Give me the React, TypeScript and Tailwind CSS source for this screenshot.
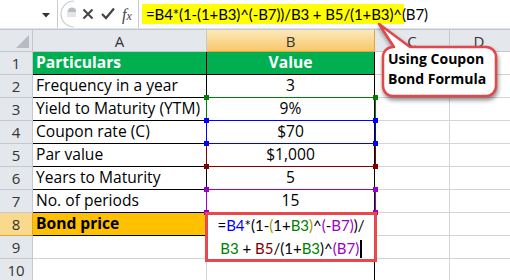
import React from "react";

const font = { fontFamily: "'Open Sans', Lato, sans-serif" };
const lato = { fontFamily: "Lato, 'Open Sans', sans-serif" };

const rows = [
  { n: 1, a: "Particulars", b: "Value", kind: "head" },
  { n: 2, a: "Frequency in a year", b: "3" },
  { n: 3, a: "Yield to Maturity (YTM)", b: "9%", ref: "border-[#008000]", handle: "bg-[#008000]", z: "z-10" },
  { n: 4, a: "Coupon rate (C)", b: "$70", ref: "border-[#0000ff]", handle: "bg-[#0000ff]", z: "z-30" },
  { n: 5, a: "Par value", b: "$1,000", ref: "border-[#800000]", handle: "bg-[#800000]", z: "z-20" },
  { n: 6, a: "Years to Maturity", b: "5" },
  { n: 7, a: "No. of periods", b: "15", ref: "border-[#9900cc]", handle: "bg-[#9900cc]", z: "z-10" },
  { n: 8, a: "Bond price", b: "", kind: "total" },
  { n: 9, a: "", b: "", kind: "empty" },
  { n: 10, a: "", b: "", kind: "empty" },
];

const RefBox = ({ border, handle, z }: { border: string; handle: string; z: string }) => (
  <div className={`absolute -left-px -top-px w-[170px] h-[24px] border ${border} ${z} pointer-events-none`}>
    <div className={`absolute -left-[3px] -top-[3px] w-[5px] h-[5px] ${handle}`} />
    <div className={`absolute -right-[3px] -top-[3px] w-[5px] h-[5px] ${handle}`} />
    <div className={`absolute -left-[3px] -bottom-[3px] w-[5px] h-[5px] ${handle}`} />
    <div className={`absolute -right-[3px] -bottom-[3px] w-[5px] h-[5px] ${handle}`} />
  </div>
);

const Blue = ({ children }: { children: React.ReactNode }) => <span className="text-[#0000ff]">{children}</span>;
const Green = ({ children }: { children: React.ReactNode }) => <span className="text-[#008000]">{children}</span>;
const Red = ({ children }: { children: React.ReactNode }) => <span className="text-[#800000]">{children}</span>;
const Purple = ({ children }: { children: React.ReactNode }) => <span className="text-[#9900cc]">{children}</span>;
const Olive = ({ children }: { children: React.ReactNode }) => <span className="text-[#999900]">{children}</span>;

export default function App() {
  return (
    <div className="relative w-[510px] h-[280px] bg-white overflow-hidden text-[15.6px] text-black" style={font}>
      {/* formula bar */}
      <div className="flex h-[30px] bg-[#dfe3e8] border-b border-[#c2c7ce]">
        <div className="flex items-center w-[58px] h-[28px] bg-white border-r border-[#c8ccd2] relative">
          <svg className="absolute left-[42px] top-[13px]" width="8" height="5" viewBox="0 0 8 5">
            <path d="M0 0 H8 L4 4.5 Z" fill="#333" />
          </svg>
        </div>
        <div className="flex items-center w-[80px] h-[28px] bg-white relative">
          <svg className="absolute left-[2px] top-0" width="16" height="28" viewBox="0 0 16 28">
            <path d="M14 1 A13 13 0 0 0 14 27" fill="none" stroke="#c9ccd1" strokeWidth="1.2" />
            <circle cx="12" cy="12" r="4.5" fill="#b9bcc1" />
            <rect x="7" y="12" width="10" height="5" fill="#e3e5e8" />
          </svg>
          <svg className="absolute left-[24px] top-[8px]" width="12" height="12" viewBox="0 0 12 12">
            <path d="M1.5 1.5 L10.5 10.5 M10.5 1.5 L1.5 10.5" stroke="#444" strokeWidth="2" />
          </svg>
          <svg className="absolute left-[43px] top-[7px]" width="14" height="13" viewBox="0 0 14 13">
            <path d="M1 7 L5 11 L13 1.5" fill="none" stroke="#444" strokeWidth="2.2" />
          </svg>
          <span className="absolute left-[64px] top-[3px] italic text-[#444] text-[16px]" style={{ fontFamily: "'Liberation Serif', serif" }}>
            f<span className="text-[12px]">x</span>
          </span>
        </div>
        <div className="flex-1 h-[28px] bg-white border-l border-[#c8ccd2] flex items-center">
          <div className="ml-[3px] h-[20px] w-[262px] bg-[#ffff00] flex items-center pl-[4px] whitespace-nowrap text-[15px] tracking-[-0.1px]" style={lato}>
            =B4*(1-(1+B3)^(-B7))/B3 + B5/(1+B3)^(B7)
          </div>
        </div>
      </div>

      {/* column headers */}
      <div className="flex h-[22px] text-[#333] text-[15px] leading-[14px]">
        <div className="w-[33px] h-full bg-[#e4e7eb] border-r border-b border-[#c5c9cf] relative">
          <svg className="absolute right-[3px] bottom-[3px]" width="13" height="13" viewBox="0 0 13 13">
            <path d="M13 0 V13 H0 Z" fill="#b8bcc2" />
          </svg>
        </div>
        <div className="w-[174px] h-full bg-[#e4e7eb] border-r border-b border-[#c5c9cf] flex items-center justify-center">A</div>
        <div className="w-[168px] h-full bg-gradient-to-b from-[#fde9b9] to-[#f6c868] border-r border-b border-[#e2a43a] flex items-center justify-center">B</div>
        <div className="w-[75px] h-full bg-[#e4e7eb] border-r border-b border-[#c5c9cf] flex items-center justify-center">C</div>
        <div className="flex-1 h-full bg-[#e4e7eb] border-b border-[#c5c9cf] flex items-center justify-center pr-[2px]">D</div>
      </div>

      {/* rows */}
      {rows.map((r) => {
        const head = r.kind === "head";
        const total = r.kind === "total";
        const empty = r.kind === "empty";
        const cellBorder = empty ? "border-[#d4d4d4]" : "border-black";
        return (
          <div key={r.n} className="flex h-[23px]">
            <div
              className={`w-[33px] h-full border-r border-b flex items-center justify-center text-[#333] text-[15px] ${
                total ? "bg-[#f9d98c] border-[#e2a43a]" : "bg-[#e4e7eb] border-[#c5c9cf]"
              }`}
            >
              {r.n}
            </div>
            <div
              className={`w-[174px] h-full border-r border-b ${cellBorder} flex items-center pl-[3px] whitespace-nowrap ${
                head ? "bg-[#00b050] text-white font-bold" : total ? "bg-[#ffc000] font-bold" : ""
              }`}
            >
              {r.a}
            </div>
            <div
              className={`relative w-[168px] h-full border-r border-b ${
                r.n === 8 || empty ? "border-r-black border-b-[#d4d4d4]" : cellBorder
              } ${r.n === 10 ? "border-r-[#d4d4d4]" : ""} flex items-center justify-center ${head ? "bg-[#00b050] text-white font-bold" : ""}`}
            >
              {r.b}
              {r.ref && <RefBox border={r.ref} handle={r.handle!} z={r.z!} />}
              {total && (
                <div
                  className="absolute -left-[2px] -top-px w-[172px] h-[50px] border-[3px] border-[#e8484b] bg-white z-40 flex flex-col items-center justify-center leading-[23px] text-[15px] whitespace-nowrap"
                  style={lato}
                >
                  <div>
                    =<Blue>B4</Blue>*(1-<Olive>(</Olive>1+<Green>B3</Green><Olive>)</Olive>^<Purple>(</Purple>-<Purple>B7</Purple><Purple>)</Purple>)/
                  </div>
                  <div className="flex items-center">
                    <Green>B3</Green>&nbsp;+&nbsp;<Red>B5</Red>/(1+<Green>B3</Green>)^<Purple>(B7)</Purple>
                    <span className="inline-block w-[1.5px] h-[18px] bg-black ml-[1px]" />
                  </div>
                </div>
              )}
            </div>
            <div className="w-[75px] h-full border-r border-b border-[#d4d4d4]" />
            <div className="flex-1 h-full border-b border-[#d4d4d4]" />
          </div>
        );
      })}

      {/* callout */}
      <div className="absolute left-[374px] top-[18px] w-[130px] h-[86px] z-50">
        <svg className="absolute inset-0" width="130" height="86" viewBox="0 0 130 86" style={{ filter: "drop-shadow(1px 3px 2px rgba(0,0,0,0.45))" }}>
          <path
            d="M20 29 L5 6 L36 29 H112 A10 10 0 0 1 122 39 V68 A10 10 0 0 1 112 78 H19 A10 10 0 0 1 9 68 V39 A10 10 0 0 1 19 29 Z"
            fill="#fff"
            stroke="#e0484b"
            strokeWidth="2.5"
            strokeLinejoin="round"
          />
        </svg>
        <div className="absolute left-[14px] top-[31px] text-[14px] font-bold leading-[20px] whitespace-nowrap" style={{ fontFamily: "'Open Sans', sans-serif" }}>
          <div>Using Coupon</div>
          <div>Bond Formula</div>
        </div>
      </div>
    </div>
  );
}
